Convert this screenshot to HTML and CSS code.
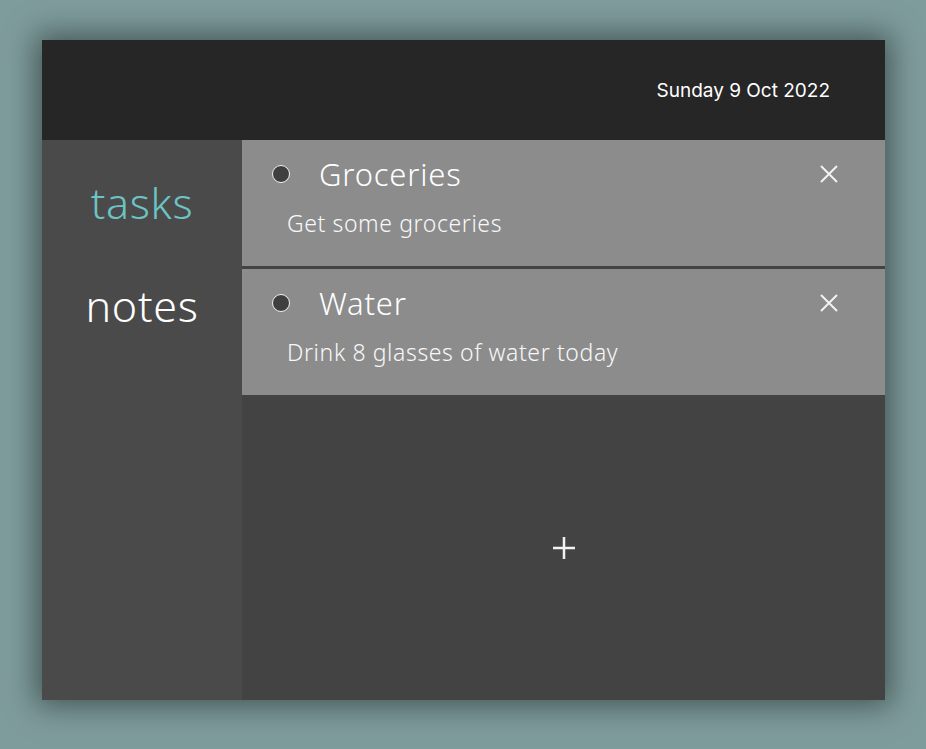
FILE: index.html
```html
<!DOCTYPE html>
<html>
<head>
<meta charset="utf-8">
<link rel="stylesheet" href="styles.css">
</head>
<body>
<div class="app">
  <header class="topbar">
    <span class="date">Sunday 9 Oct 2022</span>
  </header>
  <div class="body">
    <nav class="sidebar">
      <div class="nav-item active">tasks</div>
      <div class="nav-item">notes</div>
    </nav>
    <main class="main">
      <div class="task">
        <div class="task-head">
          <span class="radio"></span>
          <span class="title">Groceries</span>
          <svg class="close" width="20" height="20" viewBox="0 0 20 20"><path d="M2 2L18 18M18 2L2 18" stroke="#f2f2f2" stroke-width="2"/></svg>
        </div>
        <div class="desc">Get some groceries</div>
      </div>
      <div class="task">
        <div class="task-head">
          <span class="radio"></span>
          <span class="title">Water</span>
          <svg class="close" width="20" height="20" viewBox="0 0 20 20"><path d="M2 2L18 18M18 2L2 18" stroke="#f2f2f2" stroke-width="2"/></svg>
        </div>
        <div class="desc">Drink 8 glasses of water today</div>
      </div>
      <div class="add">
        <svg width="24" height="24" viewBox="0 0 24 24"><path d="M12 1V23M1 12H23" stroke="#f2f2f2" stroke-width="2.5"/></svg>
      </div>
    </main>
  </div>
</div>
</body>
</html>
```
FILE: styles.css
```css
html, body {
  margin: 0;
  padding: 0;
  height: 100%;
}
body {
  background: #7f9c9c;
  font-family: "Noto Sans", sans-serif;
  color: #fff;
}
.app {
  position: relative;
  margin: 40px 0 0 42px;
  width: 843px;
  height: 660px;
  display: flex;
  flex-direction: column;
  box-shadow: 0 0 28px 6px rgba(20, 30, 30, 0.55);
}
.topbar {
  height: 100px;
  background: #262626;
  display: flex;
  align-items: center;
  justify-content: flex-end;
  padding-right: 55px;
}
.date {
  font-family: Inter, "Noto Sans", sans-serif;
  font-size: 19px;
  color: #fff;
}
.body {
  flex: 1;
  display: flex;
  min-height: 0;
}
.sidebar {
  width: 200px;
  background: #4a4a4a;
  display: flex;
  flex-direction: column;
  align-items: center;
  padding-top: 33px;
  gap: 43px;
}
.nav-item {
  font-size: 43px;
  font-weight: 300;
  letter-spacing: 0.7px;
  line-height: 60px;
  color: #fff;
}
.nav-item.active {
  color: #6cc4c4;
}
.main {
  flex: 1;
  background: #434343;
  display: flex;
  flex-direction: column;
  gap: 3px;
}
.task {
  height: 126px;
  background: #8c8c8c;
  box-sizing: border-box;
  padding-top: 14px;
}
.task-head {
  display: flex;
  align-items: center;
  height: 40px;
  padding-left: 30px;
  padding-right: 46px;
}
.radio {
  width: 16px;
  height: 16px;
  border-radius: 50%;
  background: #3f3f3f;
  border: 1.5px solid #f2f2f2;
  flex: none;
}
.title {
  margin-left: 29px;
  font-size: 31px;
  font-weight: 300;
  letter-spacing: 0.8px;
  flex: 1;
}
.close {
  flex: none;
}
.desc {
  margin-left: 45px;
  margin-top: 14px;
  font-size: 23px;
  font-weight: 300;
  letter-spacing: 0.6px;
  line-height: 30px;
  color: #f8f8f8;
}
.add {
  flex: 1;
  display: flex;
  align-items: center;
  justify-content: center;
  padding-bottom: 2px;
}
```
